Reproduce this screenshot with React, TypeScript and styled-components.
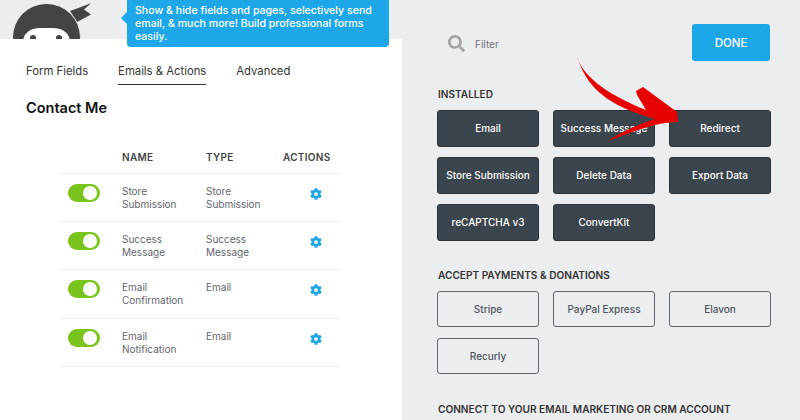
import React from 'react'
import styled, { createGlobalStyle } from 'styled-components'
import { FaCog, FaSearch } from 'react-icons/fa'

const rows = [
  { name: ['Store', 'Submission'], type: ['Store', 'Submission'] },
  { name: ['Success', 'Message'], type: ['Success', 'Message'] },
  { name: ['Email', 'Confirmation'], type: ['Email'] },
  { name: ['Email', 'Notification'], type: ['Email'] },
]

const installed = ['Email', 'Success Message', 'Redirect', 'Store Submission', 'Delete Data', 'Export Data', 'reCAPTCHA v3', 'ConvertKit']
const payments = ['Stripe', 'PayPal Express', 'Elavon', 'Recurly']

const tipLines = [
  'Show & hide fields and pages, selectively send',
  'email, & much more! Build professional forms',
  'easily.',
]

export default function App() {
  return (
    <Page>
      <GlobalStyle />
      <Builder>
        <TopBand>
          <NinjaLogo />
        </TopBand>
        <Tooltip>
          {tipLines.map(line => <div key={line}>{line}</div>)}
        </Tooltip>
        <Tabs>
          <Tab>Form Fields</Tab>
          <Tab $active>Emails &amp; Actions</Tab>
          <Tab>Advanced</Tab>
        </Tabs>
        <Title>Contact Me</Title>
        <Table>
          <HeadRow>
            <span />
            <span>NAME</span>
            <span>TYPE</span>
            <span>ACTIONS</span>
          </HeadRow>
          {rows.map(row => (
            <Row key={row.name.join(' ')}>
              <Toggle />
              <Cell>{row.name.map(line => <div key={line}>{line}</div>)}</Cell>
              <Cell>{row.type.map(line => <div key={line}>{line}</div>)}</Cell>
              <GearCell><FaCog /></GearCell>
            </Row>
          ))}
        </Table>
      </Builder>

      <Drawer>
        <DrawerTop>
          <Filter>
            <FaSearch />
            <span>Filter</span>
          </Filter>
          <Done>DONE</Done>
        </DrawerTop>

        <Heading $top={26}>INSTALLED</Heading>
        <ButtonGrid>
          {installed.map(label => <ActionButton key={label} $dark>{label}</ActionButton>)}
        </ButtonGrid>

        <Heading $top={27}>ACCEPT PAYMENTS &amp; DONATIONS</Heading>
        <ButtonGrid>
          {payments.map(label => <ActionButton key={label}>{label}</ActionButton>)}
        </ButtonGrid>

        <Heading $top={28}>CONNECT TO YOUR EMAIL MARKETING OR CRM ACCOUNT</Heading>
      </Drawer>

      <RedArrow viewBox="570 50 115 95">
        <path d="M577 56C581 74 605 94 646 110C642 102 637 97 636 91L643 87C655 96 668 105 677 112L678 122C655 122 630 133 608 141C620 132 640 124 655 119C620 109 588 95 577 56Z" />
      </RedArrow>
    </Page>
  )
}

const NinjaLogo: React.FC = () => (
  <LogoSvg viewBox="0 0 100 60">
    <path fill="#444" d="M70 11L91 3.3L84 9.5L91 14.5L77 22Z" />
    <circle fill="#444" stroke="#ecedef" strokeWidth="1" cx="46.5" cy="37.5" r="34" />
    <path fill="#fff" d="M23 60V42C23 33 31 28 40 28H53C62 28 70 33 70 42V60Z" />
    <circle fill="#444" cx="33" cy="38" r="3" />
    <circle fill="#444" cx="59" cy="38" r="3" />
  </LogoSvg>
)

const GlobalStyle = createGlobalStyle`
  html, body {
    margin: 0;
    padding: 0;
    background: #fff;
  }

  * {
    box-sizing: border-box;
  }
`

const Page = styled.div`
  position: relative;
  display: flex;
  width: 800px;
  height: 420px;
  overflow: hidden;
  font-family: Inter, "Liberation Sans", sans-serif;
`

const Builder = styled.div`
  position: relative;
  flex: none;
  width: 402px;
  background: #fff;
`

const TopBand = styled.div`
  height: 39px;
  background: #ecedef;
  overflow: hidden;
`

const LogoSvg = styled.svg`
  display: block;
  width: 100px;
  height: 60px;
`

const Tooltip = styled.div`
  position: absolute;
  top: -4px;
  left: 127px;
  width: 262px;
  height: 51px;
  padding: 8px 8px 0;
  background: #1ea7e8;
  border-radius: 4px;
  color: #fff;
  font-size: 10.6px;
  font-weight: 500;
  line-height: 13px;
  white-space: nowrap;

  &::before {
    content: '';
    position: absolute;
    top: 16px;
    left: -6px;
    border-top: 6px solid transparent;
    border-bottom: 6px solid transparent;
    border-right: 6px solid #1ea7e8;
  }
`

const Tabs = styled.div`
  display: flex;
  gap: 30px;
  padding: 24px 0 0 26px;
`

const Tab = styled.div<{ $active?: boolean }>`
  height: 22px;
  color: #333;
  font-size: 11.3px;
  line-height: 16px;
  border-bottom: 1px solid ${props => (props.$active ? '#333' : 'transparent')};
`

const Title = styled.h2`
  margin: 13px 0 0 26px;
  color: #111;
  font-size: 14.5px;
  font-weight: 600;
  line-height: 20px;
`

const Table = styled.div`
  width: 280px;
  margin: 25px 0 0 60px;
`

const HeadRow = styled.div`
  display: grid;
  grid-template-columns: 62px 84px 77px 1fr;
  align-items: center;
  height: 31px;
  padding-bottom: 3px;
  color: #444;
  font-size: 10px;
  font-weight: 600;
  letter-spacing: 0.3px;
  white-space: nowrap;
  border-bottom: 1px solid #eceeef;
`

const Row = styled.div`
  display: grid;
  grid-template-columns: 62px 84px 77px 1fr;
  height: 48.2px;
  padding-top: 11px;
  border-bottom: 1px solid #eceeef;
`

const Toggle = styled.div`
  position: relative;
  width: 32px;
  height: 18px;
  margin: -1px 0 0 8px;
  background: #7ac41e;
  border-radius: 9px;

  &::after {
    content: '';
    position: absolute;
    top: 2px;
    right: 3px;
    width: 14px;
    height: 14px;
    background: #fff;
    border-radius: 50%;
  }
`

const Cell = styled.div`
  color: #5f666d;
  font-size: 10px;
  line-height: 13px;
`

const GearCell = styled.div`
  padding: 3px 0 0 27px;
  color: #1ea7e8;
  font-size: 12px;
  line-height: 12px;
`

const Drawer = styled.div`
  flex: 1;
  min-width: 0;
  padding: 24px 30px 0 35px;
  background: #ecedef;
`

const DrawerTop = styled.div`
  display: flex;
  align-items: center;
  justify-content: space-between;
  height: 37px;
`

const Filter = styled.div`
  display: flex;
  align-items: center;
  gap: 10px;
  padding: 2px 0 0 11px;
  color: #6d7278;
  font-size: 10px;

  svg {
    color: #a5a5a5;
    font-size: 17px;
  }
`

const Done = styled.div`
  display: flex;
  align-items: center;
  justify-content: center;
  width: 78px;
  height: 37px;
  background: #1ea7e8;
  border-radius: 3px;
  color: #fff;
  font-size: 11.5px;
  font-weight: 500;
`

const Heading = styled.h3<{ $top: number }>`
  margin: ${props => props.$top}px 0 9px;
  padding-left: 1px;
  color: #333;
  font-size: 10.1px;
  font-weight: 600;
  line-height: 14px;
  white-space: nowrap;
`

const ButtonGrid = styled.div`
  display: grid;
  grid-template-columns: repeat(3, 102px);
  gap: 10.5px 14px;
`

const ActionButton = styled.div<{ $dark?: boolean }>`
  display: flex;
  align-items: center;
  justify-content: center;
  height: 36.5px;
  border-radius: 3px;
  border: 1px solid ${props => (props.$dark ? '#2c343a' : '#5f666d')};
  background: ${props => (props.$dark ? '#3b454d' : 'transparent')};
  color: ${props => (props.$dark ? '#fff' : '#4e555c')};
  font-size: 10px;
  font-weight: 500;
  white-space: nowrap;
`

const RedArrow = styled.svg`
  position: absolute;
  top: 50px;
  left: 570px;
  width: 115px;
  height: 95px;

  path {
    fill: #e60000;
  }
`
